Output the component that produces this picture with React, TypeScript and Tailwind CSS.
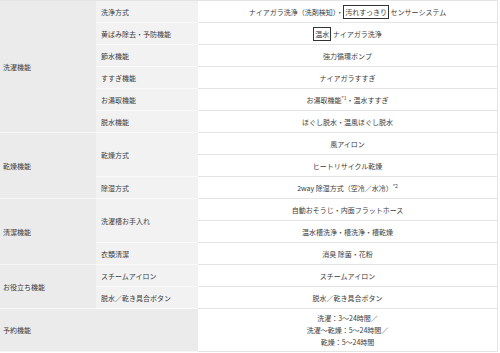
import React from "react";

const cat = "flex items-center bg-[#ebebeb] pl-[3px] border-b border-[#f6f6f6]";
const sub = "flex items-center bg-[#f2f2f2] pl-[5px] border-b border-[#fafafa]";
const val = "flex items-center justify-center bg-white border-b border-[#e4e4e4] text-center";

function Box({ children }: { children: React.ReactNode }) {
  return <span className="border border-[#333] px-[1px] leading-none py-[1px]">{children}</span>;
}

export default function App() {
  return (
    <div
      className="w-[500px] h-[353px] bg-white text-[#3c3c3c] text-[7px] leading-[10px]"
      style={{ fontFamily: '"Noto Sans CJK JP", "Noto Sans", sans-serif' }}
    >
      <div className="w-[498px] border-t border-r border-[#e4e4e4] grid grid-cols-[96px_102px_1fr] grid-rows-[repeat(14,22px)_43px]">
        <div className={`${cat} row-span-6`}>洗濯機能</div>
        <div className={sub}>洗浄方式</div>
        <div className={val}>
          <span>
            ナイアガラ洗浄（洗剤検知）・<Box>汚れすっきり</Box> センサーシステム
          </span>
        </div>
        <div className={sub}>黄ばみ除去・予防機能</div>
        <div className={val}>
          <span>
            <Box>温水</Box> ナイアガラ洗浄
          </span>
        </div>
        <div className={sub}>節水機能</div>
        <div className={val}>強力循環ポンプ</div>
        <div className={sub}>すすぎ機能</div>
        <div className={val}>ナイアガラすすぎ</div>
        <div className={sub}>お湯取機能</div>
        <div className={val}>
          <span>
            お湯取機能<sup className="text-[5px]">*1</sup>・温水すすぎ
          </span>
        </div>
        <div className={sub}>脱水機能</div>
        <div className={val}>ほぐし脱水・温風ほぐし脱水</div>

        <div className={`${cat} row-span-3`}>乾燥機能</div>
        <div className={`${sub} row-span-2`}>乾燥方式</div>
        <div className={val}>風アイロン</div>
        <div className={val}>ヒートリサイクル乾燥</div>
        <div className={sub}>除湿方式</div>
        <div className={val}>
          <span>
            2way 除湿方式（空冷／水冷）<sup className="text-[5px]">*2</sup>
          </span>
        </div>

        <div className={`${cat} row-span-3`}>清潔機能</div>
        <div className={`${sub} row-span-2`}>洗濯槽お手入れ</div>
        <div className={val}>自動おそうじ・内面フラットホース</div>
        <div className={val}>温水槽洗浄・槽洗浄・槽乾燥</div>
        <div className={sub}>衣類清潔</div>
        <div className={val}>消臭 除菌・花粉</div>

        <div className={`${cat} row-span-2`}>お役立ち機能</div>
        <div className={sub}>スチームアイロン</div>
        <div className={val}>スチームアイロン</div>
        <div className={sub}>脱水／乾き具合ボタン</div>
        <div className={val}>脱水／乾き具合ボタン</div>

        <div className={`${cat} col-span-2`}>予約機能</div>
        <div className={`${val} flex-col leading-[12px]`}>
          <span>洗濯：3～24時間／</span>
          <span>洗濯～乾燥：5～24時間／</span>
          <span>乾燥：5～24時間</span>
        </div>
      </div>
    </div>
  );
}
